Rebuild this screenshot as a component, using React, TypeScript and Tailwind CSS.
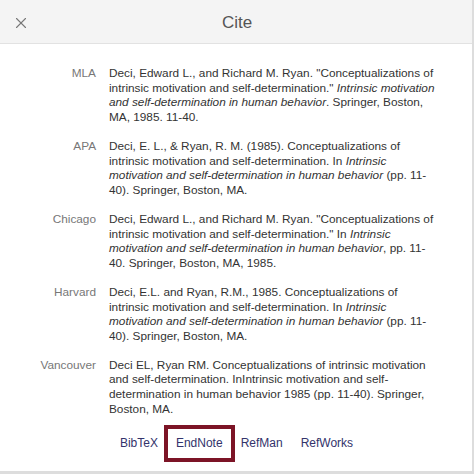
import { X } from 'lucide-react'

interface Citation {
  style: string
  parts: { text: string; italic?: boolean }[]
}

const citations: Citation[] = [
  {
    style: 'MLA',
    parts: [
      { text: 'Deci, Edward L., and Richard M. Ryan. "Conceptualizations of intrinsic motivation and self-determination." ' },
      { text: 'Intrinsic motivation and self-determination in human behavior', italic: true },
      { text: '. Springer, Boston, MA, 1985. 11-40.' },
    ],
  },
  {
    style: 'APA',
    parts: [
      { text: 'Deci, E. L., & Ryan, R. M. (1985). Conceptualizations of intrinsic motivation and self-determination. In ' },
      { text: 'Intrinsic motivation and self-determination in human behavior', italic: true },
      { text: ' (pp. 11-40). Springer, Boston, MA.' },
    ],
  },
  {
    style: 'Chicago',
    parts: [
      { text: 'Deci, Edward L., and Richard M. Ryan. "Conceptualizations of intrinsic motivation and self-determination." In ' },
      { text: 'Intrinsic motivation and self-determination in human behavior', italic: true },
      { text: ', pp. 11-40. Springer, Boston, MA, 1985.' },
    ],
  },
  {
    style: 'Harvard',
    parts: [
      { text: 'Deci, E.L. and Ryan, R.M., 1985. Conceptualizations of intrinsic motivation and self-determination. In ' },
      { text: 'Intrinsic motivation and self-determination in human behavior', italic: true },
      { text: ' (pp. 11-40). Springer, Boston, MA.' },
    ],
  },
  {
    style: 'Vancouver',
    parts: [
      {
        text: 'Deci EL, Ryan RM. Conceptualizations of intrinsic motivation and self-determination. InIntrinsic motivation and self-determination in human behavior 1985 (pp. 11-40). Springer, Boston, MA.',
      },
    ],
  },
]

const exports = ['BibTeX', 'EndNote', 'RefMan', 'RefWorks']

export default function App() {
  return (
    <div className="w-[474px] h-[474px] bg-[#dddddd] font-['Liberation_Sans',Arial,sans-serif]">
      <div className="w-[472px] h-[471px] bg-white flex flex-col overflow-hidden">
        {/* Header */}
        <div className="h-[44px] shrink-0 bg-[#f4f4f4] border-b border-[#e2e2e2] grid grid-cols-[1fr_auto_1fr] items-center pt-[2px]">
          <div className="pl-[12px] flex items-center">
            <X className="w-[18px] h-[18px] text-[#777]" strokeWidth={1.5} />
          </div>
          <div className="text-[17px] text-[#555] pl-[2px]">Cite</div>
          <div />
        </div>

        {/* Citations */}
        <div className="pt-[22px] flex flex-col gap-[14.6px]">
          {citations.map((c) => (
            <div key={c.style} className="flex leading-[14.6px]">
              <div className="w-[96px] shrink-0 text-right text-[11.8px] text-[#777]">{c.style}</div>
              <div className="ml-[13px] w-[330px] text-[11.8px] text-[#333]">
                {c.parts.map((p, i) =>
                  p.italic ? (
                    <i key={i}>{p.text}</i>
                  ) : (
                    <span key={i}>{p.text}</span>
                  )
                )}
              </div>
            </div>
          ))}
        </div>

        {/* Export links */}
        <div className="mt-[12px] flex justify-center pl-[1px]">
          {exports.map((e) => (
            <div
              key={e}
              className={`px-[9px] py-[8px] text-[12px] leading-[15px] text-[#33336b] ${
                e === 'EndNote' ? 'outline-[4px] outline-solid outline-[#7c1426] -outline-offset-1' : ''
              }`}
            >
              {e}
            </div>
          ))}
        </div>
      </div>
    </div>
  )
}
